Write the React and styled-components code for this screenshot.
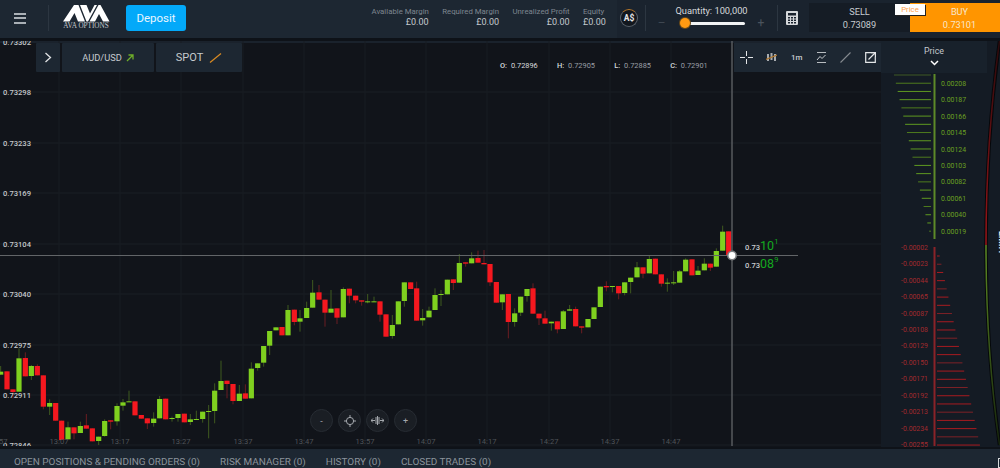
import React from 'react'
import styled, { createGlobalStyle } from 'styled-components'

const GlobalStyle = createGlobalStyle`
  html, body {
    margin: 0;
    background: #11141a;
    font-family: Roboto, "Liberation Sans", sans-serif;
  }
  #root {
    width: 1000px;
    height: 468px;
    overflow: hidden;
  }
`

// candle rows read off the reference: [colour, x, bodyTop, bodyBottom, wickTop, wickBottom]
const chunkA = [
  ['g',2,365,374,348,374],['r',21,364,418],['r',39,418,426,418,445],['g',57,325,425,295,425],
  ['r',76,324,379,307,379],['g',94,348,378,345,390],['r',112,348,376,343,376],['r',130,376,470,376,478],
  ['g',149,459,470,448,495],['r',167,459,512],['r',185,512,570],['g',204,532,568,515,568],
  ['r',222,532,550,532,568],['g',241,528,549,515,549],['r',259,526,536,492,536],['r',277,535,574],
  ['g',296,560,573,560,585],['g',314,513,558,508,560],['r',332,511,515,511,538],['g',351,468,514,460,527],
  ['g',369,457,467,447,482],['g',387,454,456,422,456],['r',405,454,496],['r',424,495,506],
  ['r',442,505,520,505,537],['g',461,506,519,487,530],['g',479,447,505,438,505],['r',497,446,508],
  ['g',516,504,506,500,515],['g',534,492,504,492,515],['r',553,491,517],['g',571,508,516,492,525],
  ['g',589,507,509,482,509],['g',608,485,507,485,518],['g',626,483,485,465,565],['g',644,422,483,400,520],
  ['g',663,393,420,332,420],['r',681,392,402,392,445],['r',699,402,453,402,463],['g',718,431,453,405,453],
  ['r',736,430,446,403,446],['g',754,356,445,337,445],['g',773,340,354,340,362],['g',791,288,338,308,350],
  ['g',809,243,287,243,315],['g',828,232,241],['r',846,231,256],['g',864,180,256,165,256],
  ['r',883,179,216,179,226],['g',900,205,215,180,245],
]

const chunkB = [
  ['g',50,204,234,185,234],['g',68,158,203,120,203],['r',87,157,179,135,179],['r',105,179,218,179,260],
  ['g',123,206,218,150,218],['r',141,205,233,205,252],['g',160,147,232,142,232],['r',178,146,167,146,190],
  ['r',197,167,181,167,190],['r',215,181,185,181,197],['g',233,184,186,162,190],['g',252,184,186,170,186],
  ['r',270,184,224,184,245],['r',288,223,290],['g',307,255,288,225,296],['g',325,184,253],
  ['g',343,127,183,127,200],['r',362,127,147],['r',380,145,242,125,242],['g',398,234,241,207,257],
  ['g',417,212,232,200,232],['g',435,165,210,145,210],['g',453,162,164,150,198],['g',472,119,163],
  ['r',490,118,129,118,150],['g',508,69,128,42,128],['r',527,67,71,67,80],['g',545,55,70,37,70],
  ['r',564,54,68,32,68],['r',582,69,73,30,73],['r',600,72,127,72,138],['r',619,126,188],
  ['g',637,163,187,163,210],['r',655,162,246,162,295],['g',674,220,246,205,260],['g',692,170,218,170,228],
  ['g',711,147,168,147,185],['r',729,145,221,130,221],['r',747,221,235,221,255],['r',765,235,251,212,251],
  ['g',784,245,250,245,272],['r',802,244,268,244,280],['g',820,214,267,210,267],['g',839,208,212,195,212],
  ['r',857,207,259,200,259],['r',875,259,263,259,280],
]

const chunkC = [
  ['g',24,327,352],['g',42,292,327],['g',61,230,291],['r',79,228,232,214,244],['g',97,228,230,228,247],
  ['r',116,228,250,228,268],['g',134,217,249,217,256],['g',152,203,216,203,250],['g',171,172,202,156,202],
  ['r',189,172,191,172,205],['g',208,147,190,135,190],['r',226,146,193],['r',244,193,221,193,230],
  ['g',262,218,220,205,245],['g',281,217,219,183,225],['g',299,184,218,180,218],['g',317,149,184,145,184],
  ['r',336,148,196],['g',354,182,195,168,195],['g',373,161,181,145,181],['r',391,161,173,161,183],
  ['g',409,123,170,115,170],['g',428,65,122,47,122],['r',446,64,135],
]

const place = (rows, ox, oy) =>
  rows.map(([c, x, t, b, wt = t, wb = b]) => ({
    c,
    x: ox + x / 3,
    top: oy + t / 3,
    bottom: oy + b / 3,
    wickTop: oy + wt / 3,
    wickBottom: oy + wb / 3,
  }))

const candles = [
  ...place(chunkA, 0, 250),
  ...place(chunkB, 290, 240),
  ...place(chunkC, 580, 210),
]

const priceAxis = [
  ['0.73302', 42],
  ['0.73298', 92],
  ['0.73233', 143],
  ['0.73169', 193],
  ['0.73104', 244],
  ['0.73040', 294],
  ['0.72975', 345],
  ['0.72911', 395],
  ['0.72846', 445],
]

const timeAxis = [
  ['12:57', -2], ['13:07', 59], ['13:17', 120], ['13:27', 181], ['13:37', 243], ['13:47', 304],
  ['13:57', 365], ['14:07', 426], ['14:17', 487], ['14:27', 549], ['14:37', 610], ['14:47', 671],
]

const stats = [
  ['Available Margin', '£0.00', 57],
  ['Required Margin', '£0.00', 57],
  ['Unrealized Profit', '£0.00', 57],
  ['Equity', '£0.00', 21],
]

const greenLevels = ['0.00208','0.00187','0.00166','0.00145','0.00124','0.00103','0.00082','0.00061','0.00040','0.00019']
const redLevels = ['-0.00002','-0.00023','-0.00044','-0.00065','-0.00087','-0.00108','-0.00129','-0.00150','-0.00171','-0.00192','-0.00213','-0.00234','-0.00255']

const Page = styled.div`
  width: 1000px;
  height: 468px;
  display: flex;
  flex-direction: column;
  background: #11141a;
  overflow: hidden;
`

const Header = styled.header`
  height: 38px;
  flex: none;
  display: flex;
  align-items: stretch;
  background: #1d2732;
  border-bottom: 3px solid #0e1218;
  box-shadow: 0 2px 0 #1a222c;
`

const MenuButton = styled.div`
  width: 48px;
  box-sizing: border-box;
  padding: 13px 22px 0 14px;
  display: flex;
  flex-direction: column;
  gap: 2.4px;
  span {
    height: 2px;
    background: #aab0b6;
  }
`

const Divider = styled.div`
  width: 1px;
  height: 26px;
  margin-top: 5px;
  background: #2c3641;
  flex: none;
`

const Logo = styled.div`
  width: 48px;
  margin-left: 13px;
  padding-top: 5px;
  display: flex;
  flex-direction: column;
  align-items: center;
  svg {
    display: block;
  }
`

const LogoText = styled.div`
  font-family: "Liberation Serif", serif;
  font-size: 7.2px;
  line-height: 9px;
  color: #c4c8cc;
  white-space: nowrap;
`

const DepositButton = styled.div`
  width: 60px;
  height: 26px;
  margin: 5px 0 0 16px;
  border-radius: 3px;
  background: #03a9f9;
  color: #e8f6ff;
  font-size: 11.5px;
  display: flex;
  align-items: center;
  justify-content: center;
`

const Stats = styled.div`
  margin-left: auto;
  display: flex;
  gap: 13.5px;
  padding: 6px 13px 0 0;
`

const Stat = styled.div`
  text-align: right;
  width: ${(p) => p.$width}px;
  white-space: nowrap;
`

const StatLabel = styled.div`
  font-size: 7.8px;
  line-height: 11px;
  color: #7d8690;
`

const StatValue = styled.div`
  font-size: 9px;
  line-height: 11px;
  color: #c3c8cd;
`

const TradeArea = styled.div`
  width: 383px;
  flex: none;
  background: #1a232e;
  display: flex;
`

const CurrencyBadge = styled.div`
  width: 16px;
  height: 16px;
  margin: 9px 7px 0 3px;
  border-radius: 50%;
  border: 1px solid #59616a;
  border-top-color: #b9792a;
  background: #12171e;
  color: #e4e6e8;
  font-size: 8.5px;
  font-weight: 700;
  display: flex;
  align-items: center;
  justify-content: center;
  flex: none;
`

const Quantity = styled.div`
  width: 131px;
  flex: none;
  display: grid;
  grid-template-columns: 34px 65px 1fr;
  grid-template-rows: 14px 12px;
  align-items: center;
  padding-top: 3px;
`

const QuantityTitle = styled.div`
  grid-column: 1 / 4;
  text-align: center;
  font-size: 9.3px;
  color: #d5d8db;
`

const Step = styled.div`
  color: #4a535d;
  font-size: ${(p) => p.$size}px;
  line-height: 12px;
  text-align: ${(p) => p.$align};
  padding-left: ${(p) => p.$inset}px;
`

const SliderTrack = styled.div`
  position: relative;
  height: 3px;
  background: #f2f3f4;
  border-radius: 2px;
`

const SliderThumb = styled.div`
  position: absolute;
  left: 0;
  top: -3.5px;
  width: 10px;
  height: 10px;
  border-radius: 50%;
  background: #ff9a12;
  box-shadow: 0 0 0 1px #6b4a18;
`

const Calculator = styled.div`
  width: 27px;
  flex: none;
  display: flex;
  justify-content: center;
  padding-top: 11px;
  svg {
    display: block;
  }
`

const QuoteBox = styled.div`
  position: relative;
  flex: 1;
  margin: 3px 0;
  display: flex;
  padding-left: 4px;
  height: 29px;
`

const QuoteSide = styled.div`
  width: ${(p) => p.$width}px;
  flex: none;
  background: ${(p) => (p.$buy ? '#ff9500' : '#151c25')};
  color: ${(p) => (p.$buy ? '#f8e6cb' : '#c7ccd1')};
  text-align: center;
  font-size: 9.2px;
  line-height: 13px;
  padding-top: 2px;
  box-sizing: border-box;
  padding-left: ${(p) => (p.$buy ? 8 : 0)}px;
`

const PriceToggle = styled.div`
  position: absolute;
  left: 90px;
  top: 1px;
  width: 30px;
  height: 11px;
  background: #fff;
  color: #ff9f4a;
  font-size: 7.8px;
  line-height: 11px;
  text-align: center;
  box-shadow: 1px 1px 0 #222;
`

const Main = styled.div`
  flex: 1;
  min-height: 0;
  display: flex;
`

const ChartArea = styled.div`
  position: relative;
  width: 881px;
  flex: none;
  overflow: hidden;
  svg.plot {
    display: block;
    font-family: Roboto, "Liberation Sans", sans-serif;
  }
`

const ChartControls = styled.div`
  position: absolute;
  top: 2px;
  left: 36px;
  display: flex;
  gap: 2px;
`

const ControlCell = styled.div`
  width: ${(p) => p.$width}px;
  height: 29px;
  background: #1d2732;
  border-radius: 1px;
  color: #c6cace;
  font-size: ${(p) => p.$size}px;
  display: flex;
  align-items: center;
  justify-content: center;
  gap: ${(p) => p.$gap}px;
`

const Ohlc = styled.div`
  position: absolute;
  top: 20px;
  left: 500px;
  display: flex;
  gap: 19.3px;
  font-size: 7.4px;
  color: #9a9fa5;
  white-space: nowrap;
  b {
    font-weight: 500;
    color: #d8dadc;
    margin-right: 2px;
  }
  i {
    font-style: normal;
    color: #d8dadc;
  }
`

const DrawTools = styled.div`
  position: absolute;
  top: 2px;
  left: 734px;
  width: 147px;
  height: 29px;
  background: #1d2732;
  display: flex;
  align-items: center;
  justify-content: space-between;
  padding: 0 5px 0 6px;
  box-sizing: border-box;
  color: #c6cace;
  font-size: 8px;
  font-weight: 500;
  svg {
    display: block;
  }
`

const QuoteTag = styled.div`
  position: absolute;
  left: 745px;
  top: ${(p) => p.$top}px;
  color: #c9cdd0;
  font-size: 7.6px;
  font-weight: 500;
  white-space: nowrap;
  display: flex;
  align-items: baseline;
  em {
    font-style: normal;
    font-weight: 400;
    font-size: 12.5px;
    color: #14a81f;
  }
  sup {
    font-size: 7.5px;
    font-weight: 400;
    color: #14a81f;
    align-self: flex-start;
    line-height: 8px;
  }
`

const ZoomBar = styled.div`
  position: absolute;
  left: 310px;
  top: 368px;
  display: flex;
  gap: 5px;
`

const ZoomButton = styled.div`
  width: 23px;
  height: 23px;
  border-radius: 50%;
  background: #1a1e24;
  border: 1px solid #272c33;
  box-sizing: border-box;
  color: #a4a8ad;
  font-size: 9px;
  display: flex;
  align-items: center;
  justify-content: center;
  svg {
    display: block;
  }
`

const Ladder = styled.aside`
  position: relative;
  flex: 1;
  background: #141b24;
  overflow: hidden;
  svg.ticks {
    position: absolute;
    inset: 0;
  }
`

const LadderHead = styled.div`
  position: relative;
  width: 106px;
  height: 32px;
  background: #18212b;
  color: #c4c8cc;
  font-size: 8.8px;
  text-align: center;
  padding-top: 5px;
  box-sizing: border-box;
  line-height: 11px;
  svg {
    display: block;
    margin: 3px auto 0;
  }
`

const Levels = styled.div`
  position: absolute;
  top: ${(p) => p.$top}px;
  ${(p) => (p.$red ? 'right: 72px;' : 'left: 60px;')}
  display: flex;
  flex-direction: column;
  text-align: right;
  font-size: 6.9px;
  color: ${(p) => (p.$red ? '#a12a2e' : '#6aa022')};
  div {
    height: 16.44px;
    line-height: 16.44px;
  }
`

const LimitTag = styled.div`
  position: absolute;
  top: 190px;
  left: 116px;
  writing-mode: vertical-rl;
  color: #e6e8ea;
  font-size: 9px;
  font-weight: 700;
`

const Tabs = styled.nav`
  height: 21px;
  flex: none;
  box-sizing: border-box;
  border-top: 2px solid #0e1218;
  background: #1d2732;
  display: flex;
  align-items: flex-end;
  padding: 0 0 0 14px;
  position: relative;
`

const Tab = styled.div`
  font-size: 9.95px;
  line-height: 13px;
  color: #8b939b;
  margin-right: ${(p) => p.$gap}px;
  white-space: nowrap;
`

const EdgeBox = styled.div`
  position: absolute;
  right: 0;
  top: 9px;
  width: 2px;
  height: 10px;
  border: 1px solid #d8dadc;
  border-right: 0;
  box-sizing: border-box;
`

const Candle = ({ c, x, top, bottom, wickTop, wickBottom }) => {
  const body = c === 'g' ? '#7fd01f' : '#f5181f'
  const wick = c === 'g' ? '#3f5a1f' : '#6b1d22'
  return (
    <g>
      <line x1={x} x2={x} y1={wickTop} y2={wickBottom} stroke={wick} strokeWidth="1" />
      <rect x={x - 2.6} y={top} width="5.2" height={Math.max(bottom - top, 1)} fill={body} />
    </g>
  )
}

const PriceChart = () => (
  <svg className="plot" width="881" height="405" viewBox="0 41 881 405">
    {priceAxis.slice(1).map(([, y]) => (
      <line key={y} x1="0" x2="881" y1={y} y2={y} stroke="#1a1e25" strokeWidth="1" />
    ))}
    {timeAxis.map(([, x]) => (
      <line key={x} x1={x} x2={x} y1="41" y2="446" stroke="#181c22" strokeWidth="1" />
    ))}
    {candles.map((k) => (
      <Candle key={k.x} {...k} />
    ))}
    <line x1="0" x2="798" y1="255.5" y2="255.5" stroke="#626568" strokeWidth="1" />
    <line x1="732" x2="732" y1="41" y2="446" stroke="#5c5f63" strokeWidth="1.4" />
    <circle cx="732" cy="255.5" r="5" fill="#7a7d80" />
    <circle cx="732" cy="255.5" r="3.4" fill="#fff" />
    {priceAxis.map(([label, y]) => (
      <text key={label} x="3" y={y + 3} fontSize="7.6" fontWeight="500" fill="#c4c7ca">{label}</text>
    ))}
    {timeAxis.map(([label, x]) => (
      <text key={label} x={x} y="443.5" fontSize="7.6" textAnchor="middle" fill="#4f5358">{label}</text>
    ))}
  </svg>
)

const LadderTicks = () => (
  <svg className="ticks" width="119" height="405" viewBox="881 41 119 405">
    <defs>
      <linearGradient id="curveRed" gradientUnits="userSpaceOnUse" x1="0" y1="41" x2="0" y2="245">
        <stop offset="0" stopColor="#2a0a0c" />
        <stop offset="1" stopColor="#9c1418" />
      </linearGradient>
      <linearGradient id="curveGreen" gradientUnits="userSpaceOnUse" x1="0" y1="245" x2="0" y2="445">
        <stop offset="0" stopColor="#5d8c24" />
        <stop offset="1" stopColor="#16240c" />
      </linearGradient>
    </defs>
    <rect x="933.5" y="74" width="2" height="165" fill="#5d8a28" />
    <rect x="933.5" y="247" width="2" height="199" fill="#8a2328" />
    {Array.from({ length: 20 }, (_, i) => (
      <line key={i} x1={894 + i * 1.85} x2="931" y1={75 + i * 8.22} y2={75 + i * 8.22}
        stroke={i === 0 ? '#3f5a24' : i % 3 === 1 ? '#4f7c1d' : '#5f9a20'} strokeWidth="1" />
    ))}
    {Array.from({ length: 24 }, (_, i) => (
      <line key={i} x1="937" x2={939.7 + i * 1.75} y1={256 + i * 8.22} y2={256 + i * 8.22}
        stroke={i % 3 === 1 ? '#7d2227' : '#a81b20'} strokeWidth="1" />
    ))}
    <path d="M999.5 41 Q986 140 986 245" fill="none" stroke="#05070a" strokeWidth="3.4" />
    <path d="M986 245 Q986 350 999.5 445" fill="none" stroke="#05070a" strokeWidth="3.4" />
    <path d="M999.5 41 Q986 140 986 245" fill="none" stroke="url(#curveRed)" strokeWidth="1.5" />
    <path d="M986 245 Q986 350 999.5 445" fill="none" stroke="url(#curveGreen)" strokeWidth="1.5" />
  </svg>
)

const App = () => (
  <Page>
    <GlobalStyle />
    <Header>
      <MenuButton>
        <span />
        <span />
        <span />
      </MenuButton>
      <Divider />
      <Logo>
        <svg width="47" height="17" viewBox="0 0 47 17">
          <path fill="#fff" d="M0 16.5 L11 0 H15.5 L22 16.5 H15 L11.5 8 L6.5 16.5 Z" />
          <path fill="#fff" d="M17 0 H23.5 L27 8.5 L31.5 0 H34 L25 16.5 H23.5 Z" />
          <path fill="#fff" d="M26.5 16.5 L35.5 0 H37.5 L46.5 16.5 H40 L36 9 L32 16.5 Z" />
        </svg>
        <LogoText>AVA OPTIONS</LogoText>
      </Logo>
      <DepositButton>Deposit</DepositButton>
      <Stats>
        {stats.map(([label, value, width]) => (
          <Stat key={label} $width={width}>
            <StatLabel>{label}</StatLabel>
            <StatValue>{value}</StatValue>
          </Stat>
        ))}
      </Stats>
      <TradeArea>
        <CurrencyBadge>A$</CurrencyBadge>
        <Divider />
        <Quantity>
          <QuantityTitle>Quantity: 100,000</QuantityTitle>
          <Step $align="left" $size={9} $inset={12}>—</Step>
          <SliderTrack>
            <SliderThumb />
          </SliderTrack>
          <Step $align="center" $size={12} $inset={0}>+</Step>
        </Quantity>
        <Divider />
        <Calculator>
          <svg width="12" height="14" viewBox="0 0 12 14">
            <path fill="#d5d8db" fillRule="evenodd" d="M1 0H11A1 1 0 0 1 12 1V13A1 1 0 0 1 11 14H1A1 1 0 0 1 0 13V1A1 1 0 0 1 1 0ZM2 2V4.5H10V2ZM2 6V7.5H4V6ZM5 6V7.5H7V6ZM8 6V7.5H10V6ZM2 8.5V10H4V8.5ZM5 8.5V10H7V8.5ZM8 8.5V10H10V8.5ZM2 11V12.5H4V11ZM5 11V12.5H7V11ZM8 11V12.5H10V11Z" />
          </svg>
        </Calculator>
        <QuoteBox>
          <QuoteSide $width={101}>
            SELL
            <br />
            0.73089
          </QuoteSide>
          <QuoteSide $buy $width={91}>
            BUY
            <br />
            0.73101
          </QuoteSide>
          <PriceToggle>Price</PriceToggle>
        </QuoteBox>
      </TradeArea>
    </Header>
    <Main>
      <ChartArea>
        <PriceChart />
        <ChartControls>
          <ControlCell $width={24} $size={10} $gap={0}>
            <svg width="8" height="11" viewBox="0 0 8 11">
              <path d="M1.5 1 L6.5 5.5 L1.5 10" fill="none" stroke="#e0e2e4" strokeWidth="1.3" />
            </svg>
          </ControlCell>
          <ControlCell $width={92} $size={9.3} $gap={4}>
            AUD/USD
            <svg width="8" height="8" viewBox="0 0 8 8">
              <path d="M1 7 L7 1 M2.5 1 H7 V5.5" fill="none" stroke="#6fae2a" strokeWidth="1.3" />
            </svg>
          </ControlCell>
          <ControlCell $width={86} $size={11} $gap={6}>
            SPOT
            <svg width="13" height="10" viewBox="0 0 13 10">
              <path d="M1 9.5 L12 0.5" fill="none" stroke="#d98a22" strokeWidth="1.2" />
            </svg>
          </ControlCell>
        </ChartControls>
        <Ohlc>
          <span><b>O:</b> <i>0.72896</i></span>
          <span><b>H:</b> 0.72905</span>
          <span><b>L:</b> 0.72885</span>
          <span><b>C:</b> 0.72901</span>
        </Ohlc>
        <DrawTools>
          <svg width="13" height="13" viewBox="0 0 13 13">
            <path d="M6.5 0 V5 M6.5 8 V13 M0 6.5 H5 M8 6.5 H13" stroke="#e4e6e8" strokeWidth="1" />
          </svg>
          <svg width="11" height="9" viewBox="0 0 11 9">
            <path d="M2 1 V8 M5.5 0 V7 M9 1 V8" stroke="#a8acb0" strokeWidth="2" />
            <path d="M0 6.5 L11 2" stroke="#b0762c" strokeWidth="1.3" />
          </svg>
          <span>1m</span>
          <svg width="11" height="11" viewBox="0 0 11 11">
            <path d="M1 .5 H10 M1 10.5 H10" stroke="#b8bcc0" strokeWidth="1" />
            <path d="M1 8 L4 4.5 L6 6.5 L9.5 3" fill="none" stroke="#c8ccd0" strokeWidth="1" />
          </svg>
          <svg width="11" height="11" viewBox="0 0 11 11">
            <path d="M.5 10.5 L10.5 .5" stroke="#868b90" strokeWidth="1.1" />
          </svg>
          <svg width="11" height="11" viewBox="0 0 11 11">
            <path d="M8 .7 H.7 V10.3 H10.3 V5" fill="none" stroke="#e4e6e8" strokeWidth="1.2" />
            <path d="M3.5 7.5 L10 1 M6 .6 H10.4 V5" fill="none" stroke="#e4e6e8" strokeWidth="1.2" />
          </svg>
        </DrawTools>
        <QuoteTag $top={197}>0.73<em>10</em><sup>1</sup></QuoteTag>
        <QuoteTag $top={215}>0.73<em>08</em><sup>9</sup></QuoteTag>
        <ZoomBar>
          <ZoomButton>-</ZoomButton>
          <ZoomButton>
            <svg width="12" height="12" viewBox="0 0 12 12">
              <circle cx="6" cy="6" r="3.6" fill="none" stroke="#a4a8ad" strokeWidth="1" />
              <path d="M6 0 V3 M6 9 V12 M0 6 H3 M9 6 H12" stroke="#a4a8ad" strokeWidth="1" />
            </svg>
          </ZoomButton>
          <ZoomButton>
            <svg width="13" height="9" viewBox="0 0 13 9">
              <path d="M5 1 V8 M6.5 0 V9 M8 1 V8" stroke="#a4a8ad" strokeWidth="1" />
              <path d="M0 4.5 H4 M9 4.5 H13 M2 2.5 L0 4.5 L2 6.5 M11 2.5 L13 4.5 L11 6.5" fill="none" stroke="#a4a8ad" strokeWidth="1" />
            </svg>
          </ZoomButton>
          <ZoomButton>+</ZoomButton>
        </ZoomBar>
      </ChartArea>
      <Ladder>
        <LadderTicks />
        <LadderHead>
          Price
          <svg width="9" height="6" viewBox="0 0 9 6">
            <path d="M1 1 L4.5 4.5 L8 1" fill="none" stroke="#fff" strokeWidth="1.5" />
          </svg>
        </LadderHead>
        <Levels $top={34.8}>
          {greenLevels.map((v) => (
            <div key={v}>{v}</div>
          ))}
        </Levels>
        <Levels $red $top={198.8}>
          {redLevels.map((v) => (
            <div key={v}>{v}</div>
          ))}
        </Levels>
        <LimitTag>LIMIT</LimitTag>
      </Ladder>
    </Main>
    <Tabs>
      <Tab $gap={20}>OPEN POSITIONS &amp; PENDING ORDERS (0)</Tab>
      <Tab $gap={20}>RISK MANAGER (0)</Tab>
      <Tab $gap={20}>HISTORY (0)</Tab>
      <Tab $gap={0}>CLOSED TRADES (0)</Tab>
      <EdgeBox />
    </Tabs>
  </Page>
)

export default App
